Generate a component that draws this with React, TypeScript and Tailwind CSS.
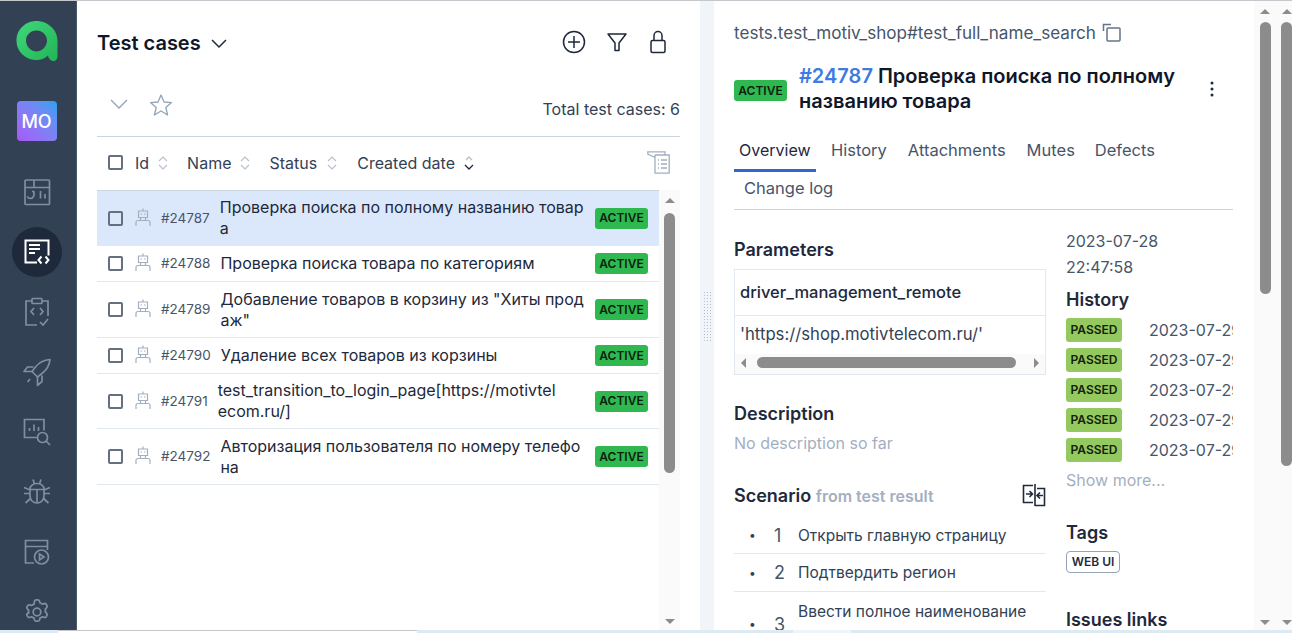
import type { ReactNode } from 'react';

const strokeIcon = 'fill-none stroke-current';

const Logo = () => (
  <svg width="42" height="42" viewBox="0 0 42 42" className="block">
    <defs>
      <linearGradient id="logoGrad" x1="0" y1="0" x2="1" y2="1">
        <stop offset="0" stopColor="#3fd77b" />
        <stop offset="1" stopColor="#22b455" />
      </linearGradient>
    </defs>
    <path
      d="M20.5 1C9.5 1 .5 9.5.5 20.5S9.5 40 20.5 40c5 0 9-2 11.5-4.5.6 3 2.700 5.500 5.500 5.500 2.400 0 4-1.800 4-4.500V20.500C41.500 9.500 31.500 1 20.500 1Zm0 9.500c6 0 10.500 4.500 10.500 10s-4.500 11-10.500 11S10 26 10 20.500s4.500-10 10.500-10Z"
      fill="url(#logoGrad)"
      fillRule="evenodd"
    />
  </svg>
);

const DashboardIcon = () => (
  <svg width="28" height="28" viewBox="0 0 28 28" className={strokeIcon} strokeWidth="1.7">
    <rect x="2" y="2" width="24.500" height="24.500" rx="1" />
    <path d="M2 9.500h24.500M11 2v7.500M9 13.500h1.800c1 3.500-.5 7-3.500 7-1.500 0-2.500-.8-3-2M17.500 13v7.500M22 16v4.500" />
  </svg>
);

const CasesIcon = () => (
  <svg width="28" height="28" viewBox="0 0 28 28" className={strokeIcon} strokeWidth="2">
    <path d="M14 24.500H2.500V2.500h23v15" />
    <path d="M6 7h11M6 11h11M6 15h6" />
    <path d="m18.500 18.500-3 3.500 3 3.500M22.500 18.500l3 3.500-3 3.500" />
  </svg>
);

const ClipboardIcon = () => (
  <svg width="26" height="30" viewBox="0 0 26 30" className={strokeIcon} strokeWidth="1.7">
    <path d="M8 4H2v24h11M18 4h6v15" />
    <rect x="8" y="1.500" width="10" height="5" rx="1" />
    <path d="m10 11-3 3.500 3 3.500M16 11l3 3.500-3 3.500M16 25l3 3 5-6" />
  </svg>
);

const RocketIcon = () => (
  <svg width="28" height="28" viewBox="0 0 28 28" className={strokeIcon} strokeWidth="1.700" strokeLinejoin="round">
    <path d="M27 1.500c-6 .5-11 3-14.500 7.500L9 13.500l5.500 5.500 4.500-3.500c4.500-3.500 7.500-8.500 8-14Z" />
    <path d="M10.500 9H4.500L1 13.500l8 0M19 17.500v6L14.500 27.500v-8.500M7 21l-2.500 3" />
  </svg>
);

const ReportIcon = () => (
  <svg width="28" height="28" viewBox="0 0 28 28" className={strokeIcon} strokeWidth="1.700">
    <path d="M14 19.500H1.500V1.500h19.500v11" />
    <path d="M6.500 13v-3M11 13V6.500M15.500 13V9" />
    <circle cx="19.500" cy="19.500" r="5" />
    <path d="m23 23 4 4" />
  </svg>
);

const BugIcon = () => (
  <svg width="28" height="28" viewBox="0 0 28 28" className={strokeIcon} strokeWidth="1.700">
    <path d="M7 11c0-3 3-5.500 7-5.500s7 2.500 7 5.500v7c0 4-3 7-7 7s-7-3-7-7v-7Z" />
    <path d="M7 11.500h14M14 11.500V25M10 1.500l1.500 4.500M18 1.500 16.500 6M1 9.500l6 2.500M27 9.500l-6 2.500M1 15.500h6M27 15.500h-6M2.500 25l5-4.500M25.500 25l-5-4.500" />
  </svg>
);

const PlayWindowIcon = () => (
  <svg width="26" height="26" viewBox="0 0 26 26" className={strokeIcon} strokeWidth="1.700">
    <path d="M10 24H1.500V1.500h22V11M1.500 7.500h22" />
    <circle cx="17.500" cy="18" r="7" />
    <path d="m15.500 15 4.500 3-4.500 3Z" />
  </svg>
);

const GearIcon = () => (
  <svg width="28" height="28" viewBox="0 0 24 24" className={strokeIcon} strokeWidth="1.500" strokeLinejoin="round">
    <path d="M9.900 2.500c.2-.7.800-1 1.400-1h1.400c.6 0 1.200.3 1.400 1l.4 1.600c.8.300 1.500.7 2.100 1.200l1.600-.5c.7-.2 1.300 0 1.700.6l.7 1.200c.3.500.2 1.200-.3 1.700l-1.200 1.200c.2.800.2 1.600 0 2.400l1.200 1.200c.5.500.6 1.200.3 1.700l-.7 1.200c-.4.600-1 .8-1.700.6l-1.600-.5c-.6.500-1.300.9-2.100 1.200l-.4 1.600c-.2.700-.8 1-1.400 1h-1.400c-.6 0-1.200-.3-1.400-1l-.4-1.600c-.8-.3-1.500-.7-2.100-1.200l-1.600.5c-.7.200-1.300 0-1.700-.6l-.7-1.200c-.3-.5-.2-1.200.3-1.700L4.900 13c-.2-.8-.2-1.600 0-2.400L3.700 9.400c-.5-.5-.6-1.200-.3-1.700l.7-1.200c.4-.6 1-.8 1.700-.6l1.600.5c.6-.5 1.300-.9 2.100-1.200Z" />
    <circle cx="12" cy="12" r="3.300" />
  </svg>
);

const RobotIcon = () => (
  <svg width="16" height="19" viewBox="0 0 16 19" className="-mt-[2px] fill-none stroke-[#a3afbf]" strokeWidth="1.200">
    <path d="M8 .5v2.500M3.500 3h9v6.500h-9zM5.500 6h1.500M9 6h1.500M5.500 9.500v3M10.500 9.500v3M1 18v-3.500c0-1 1-2 2-2h10c1 0 2 1 2 2V18" />
  </svg>
);

const Sorter = () => (
  <svg width="12" height="16" viewBox="0 0 12 16" className="fill-none stroke-[#b6c0cd]" strokeWidth="1.100">
    <path d="m2 6 4-4 4 4M2 10l4 4 4-4" />
  </svg>
);

const SortDown = () => (
  <svg width="12" height="16" viewBox="0 0 12 16" className="fill-none stroke-[#1e293b]" strokeWidth="1.300">
    <path d="m3 5 3-3 3 3" className="stroke-[#b6c0cd]" />
    <path d="m2 10 4 4 4-4" />
  </svg>
);

const Checkbox = () => <span className="block h-[15px] w-[15px] shrink-0 rounded-[2px] border-2 border-[#64707f]" />;

const ActiveBadge = () => (
  <span className="flex h-[21px] w-[53px] shrink-0 items-center justify-center rounded-[3px] bg-[#2fb84f] text-[12px] font-semibold leading-none text-[#0b1f10]">
    ACTIVE
  </span>
);

const Scrollbar = ({ top, height, h, className = '' }: { top: number; height: number; h: number; className?: string }) => (
  <div className={`flex shrink-0 flex-col items-center bg-[#fafafa] ${className}`} style={{ height: h }}>
    <span className="mt-[8px] h-0 w-0 border-x-[5px] border-b-[5px] border-x-transparent border-b-[#8c8c8c]" />
    <span className="w-[11px] rounded-full bg-[#8c8c8c]" style={{ marginTop: top, height }} />
    <span className="mt-auto mb-[6px] h-0 w-0 border-x-[5px] border-t-[5px] border-x-transparent border-t-[#8c8c8c]" />
  </div>
);

const rows = [
  { id: '#24787', lines: ['Проверка поиска по полному названию товар', 'а'], h: 'h-[55px]', selected: true },
  { id: '#24788', lines: ['Проверка поиска товара по категориям'], h: 'h-[36px]' },
  { id: '#24789', lines: ['Добавление товаров в корзину из "Хиты прод', 'аж"'], h: 'h-[56px]' },
  { id: '#24790', lines: ['Удаление всех товаров из корзины'], h: 'h-[36px]' },
  { id: '#24791', lines: ['test_transition_to_login_page[https://motivtel', 'ecom.ru/]'], h: 'h-[55px]' },
  { id: '#24792', lines: ['Авторизация пользователя по номеру телефо', 'на'], h: 'h-[56px]' },
];

const Row = ({ id, lines, h, selected }: { id: string; lines: string[]; h: string; selected?: boolean }) => (
  <div className={`flex items-center border-b border-[#e2e8f0] pl-[11px] pr-[11px] ${h} ${selected ? 'bg-[#dbe8fb]' : ''}`}>
    <Checkbox />
    <span className="ml-[12px] mr-[10px]">
      <RobotIcon />
    </span>
    <span className="mr-[10px] text-[13.500px] text-[#475569]">{id}</span>
    <span className="min-w-0 flex-1 whitespace-nowrap text-[16px] leading-[21px] text-[#1e293b]">
      {lines.map((l) => (
        <span key={l} className="block">
          {l}
        </span>
      ))}
    </span>
    <ActiveBadge />
  </div>
);

const SectionTitle = ({ children, className = '' }: { children: ReactNode; className?: string }) => (
  <h3 className={`text-[18px] font-semibold leading-[24px] text-[#1e293b] ${className}`}>{children}</h3>
);

const Step = ({ n, text, h }: { n: number; text: string; h: string }) => (
  <div className={`flex items-center border-b border-[#e2e8f0] ${h}`}>
    <span className="w-[34px] pl-[15px] text-[12px] text-[#334155]">•</span>
    <span className="w-[30px] pl-[6px] text-[18px] text-[#475569]">{n}</span>
    <span className="text-[15.500px] leading-[21px] text-[#334155]">{text}</span>
  </div>
);

const navIcons = [
  <DashboardIcon key="d" />,
  <CasesIcon key="c" />,
  <ClipboardIcon key="cl" />,
  <RocketIcon key="r" />,
  <ReportIcon key="re" />,
  <BugIcon key="b" />,
  <PlayWindowIcon key="p" />,
  <GearIcon key="g" />,
];

export default function App() {
  return (
    <div className="flex h-[633px] w-[1292px] flex-col overflow-hidden bg-white font-['Inter',sans-serif]">
      <div className="h-px shrink-0 bg-[#c4c8cc]" />
      <div className="flex min-h-0 flex-1">
        {/* sidebar */}
        <aside className="flex w-[77px] shrink-0 flex-col items-center overflow-hidden border-r border-[#4a5a6e] bg-[#334155] pr-[3px] text-[#7f8ea3]">
          <div className="mt-[19px] h-[42px]">
            <Logo />
          </div>
          <div className="mt-[39px] flex h-[40px] w-[40px] shrink-0 items-center justify-center rounded-[4px] bg-gradient-to-tr from-[#a855f7] to-[#1da1f2] text-[18px] font-medium text-white">
            MO
          </div>
          <div className="mt-[20px] flex flex-col pt-[1px]">
            {navIcons.map((icon, i) => (
              <div key={i} className="flex h-[60px] w-[50px] shrink-0 items-center justify-center">
                {i === 1 ? (
                  <span className="flex h-[50px] w-[50px] items-center justify-center rounded-full bg-[#1e293b] text-white">
                    {icon}
                  </span>
                ) : (
                  icon
                )}
              </div>
            ))}
          </div>
        </aside>

        {/* test cases list */}
        <section className="flex w-[623px] shrink-0 flex-col pl-[20px] pr-[20px]">
          <div className="flex h-[63px] shrink-0 items-end pb-[7px]">
            <h1 className="text-[20px] font-semibold leading-[28px] text-[#0f172a]">Test cases</h1>
            <svg width="18" height="28" viewBox="0 0 18 28" className="ml-[9px] fill-none stroke-[#1e293b]" strokeWidth="1.500">
              <path d="m2 11 7 7 7-7" />
            </svg>
            <div className="mb-[3px] ml-auto flex items-center gap-[20px] pr-[12px] text-[#1e293b]">
              <svg width="24" height="24" viewBox="0 0 24 24" className={strokeIcon} strokeWidth="1.500">
                <circle cx="12" cy="12" r="10.500" />
                <path d="M12 6v12M6 12h12" />
              </svg>
              <svg width="22" height="22" viewBox="0 0 22 22" className={strokeIcon} strokeWidth="1.500" strokeLinejoin="round">
                <path d="M2 3h18l-7 9v7.500H9V12Z" />
              </svg>
              <svg width="20" height="24" viewBox="0 0 20 24" className={strokeIcon} strokeWidth="1.500">
                <rect x="3" y="10.500" width="14" height="12" rx="1.500" />
                <path d="M6 10.500V5.500a4 4 0 0 1 8 0v5" />
              </svg>
            </div>
          </div>
          <div className="flex h-[73px] shrink-0 items-center border-b border-[#cbd5e1] pt-[10px]">
            <svg width="20" height="20" viewBox="0 0 20 20" className="ml-[12px] fill-none stroke-[#94a3b8]" strokeWidth="1.300">
              <path d="m2 5 8 8 8-8" />
            </svg>
            <svg width="24" height="24" viewBox="0 0 24 24" className="ml-[20px] fill-none stroke-[#94a3b8]" strokeWidth="1.300" strokeLinejoin="round">
              <path d="m12 2 3 7 7.500.6-5.700 4.900 1.800 7.500L12 18l-6.600 4 1.800-7.500L1.500 9.600 9 9Z" />
            </svg>
            <span className="ml-auto mt-[8px] text-[16px] text-[#334155]">Total test cases: 6</span>
          </div>
          <div className="flex h-[53px] shrink-0 items-center pb-[2px] pl-[11px] text-[16px] text-[#334155]">
            <Checkbox />
            <span className="ml-[12px]">Id</span>
            <span className="ml-[8px]"><Sorter /></span>
            <span className="ml-[18px]">Name</span>
            <span className="ml-[8px]"><Sorter /></span>
            <span className="ml-[18px]">Status</span>
            <span className="ml-[9px]"><Sorter /></span>
            <span className="ml-[19px]">Created date</span>
            <span className="ml-[8px]"><SortDown /></span>
            <svg width="23" height="23" viewBox="0 0 23 23" className="ml-auto mr-[10px] fill-none stroke-[#a3afbf]" strokeWidth="1.300">
              <path d="M18 4V.8H.8V3L8 6.500M8 4h14.200v18.200H8V4M11 9h1M14 9h6M11 13h1M14 13h6M11 17h1M14 17h6" />
            </svg>
          </div>
          <div className="flex min-h-0 flex-1">
            <div className="min-w-0 flex-1 border-t border-[#cbd5e1]">
              {rows.map((r) => (
                <Row key={r.id} {...r} />
              ))}
            </div>
            <Scrollbar top={10} height={260} h={440} className="w-[21px]" />
          </div>
        </section>

        {/* splitter */}
        <div className="flex w-[14px] shrink-0 items-center justify-center bg-[#f1f5f9]">
          <span className="h-[50px] w-[8px] bg-[radial-gradient(#b4bfcc_1px,transparent_1px)] bg-[length:3px_3px]" />
        </div>

        {/* test case details */}
        <section className="flex min-w-0 flex-1">
          <div className="w-[540px] shrink-0 overflow-hidden pl-[20px] pr-[21px]">
            <div className="mt-[20px] flex items-center text-[17.100px] leading-[24px] text-[#475569]">
              tests.test_motiv_shop#test_full_name_search
              <svg width="20" height="20" viewBox="0 0 20 20" className="ml-[6px] fill-none stroke-[#64748b]" strokeWidth="1.500">
                <rect x="5" y="5" width="13" height="13" rx="1" />
                <path d="M1.500 8V1.500H9" />
              </svg>
            </div>
            <div className="mt-[19px] flex items-center">
              <span className="mt-[3px]">
                <ActiveBadge />
              </span>
              <h2 className="ml-[12px] w-[385px] text-[20px] font-semibold leading-[25px] text-[#0f172a]">
                <span className="text-[#3f7be0]">#24787</span> Проверка поиска по полному названию товара
              </h2>
              <svg width="6" height="18" viewBox="0 0 6 18" className="ml-[25px] fill-[#1e293b]">
                <circle cx="3" cy="3" r="1.500" />
                <circle cx="3" cy="9" r="1.500" />
                <circle cx="3" cy="15" r="1.500" />
              </svg>
            </div>
            <div className="mt-[21px] border-b border-[#cbd5e1] pb-[7px] text-[16.500px] text-[#475569]">
              <div className="flex h-[37px]">
                <span className="h-[37px] w-[82px] border-b-[3px] border-[#3366cc] pl-[5px] pt-[3px] text-[16px] text-[#1e293b]">Overview</span>
                <span className="ml-[15px] pt-[3px]">History</span>
                <span className="ml-[21px] pt-[3px]">Attachments</span>
                <span className="ml-[21px] pt-[3px]">Mutes</span>
                <span className="ml-[20px] pt-[3px]">Defects</span>
              </div>
              <div className="h-[30px] pl-[10px] pt-[4px]">Change log</div>
            </div>
            <div className="flex gap-[20px]">
              <div className="w-[312px] shrink-0">
                <SectionTitle className="mt-[28px]">Parameters</SectionTitle>
                <div className="mt-[7px] border border-[#e2e8f0]">
                  <div className="flex h-[46px] items-center border-b border-[#e2e8f0] pl-[5px] text-[16.500px] font-medium text-[#1e293b]">
                    driver_management_remote
                  </div>
                  <div className="flex h-[38px] items-center pl-[5px] text-[16.700px] text-[#334155]">
                    'https://shop.motivtelecom.ru/'
                  </div>
                  <div className="flex h-[20px] items-center bg-[#fafafa] px-[6px] pb-[3px]">
                    <span className="h-0 w-0 border-y-[5px] border-r-[5px] border-y-transparent border-r-[#8c8c8c]" />
                    <span className="ml-[11px] h-[11px] w-[259px] rounded-full bg-[#8c8c8c]" />
                    <span className="ml-auto h-0 w-0 border-y-[5px] border-l-[5px] border-y-transparent border-l-[#8c8c8c]" />
                  </div>
                </div>
                <SectionTitle className="mt-[27px]">Description</SectionTitle>
                <p className="mt-[5px] text-[16px] leading-[24px] text-[#a3afbf]">No description so far</p>
                <div className="mt-[29px] flex items-center justify-between">
                  <SectionTitle>
                    Scenario <span className="text-[16px] text-[#a3afbf]">from test result</span>
                  </SectionTitle>
                  <svg width="24" height="24" viewBox="0 0 24 24" className="-mt-[3px] fill-none stroke-[#1e293b]" strokeWidth="1.600">
                    <path d="M11 2.500H1.500v17H11M13 1v22M15 5.500h7.500v17H13M4 11h6M7.500 8l3 3-3 3M21 12.500h-6M18 9.500l-3 3 3 3" />
                  </svg>
                </div>
                <div className="mt-[9px]">
                  <Step n={1} text="Открыть главную страницу" h="h-[37px]" />
                  <Step n={2} text="Подтвердить регион" h="h-[38px]" />
                  <div className="flex h-[64px] items-center">
                    <span className="w-[34px] pl-[15px] text-[12px] text-[#334155]">•</span>
                    <span className="w-[30px] pl-[6px] text-[18px] text-[#475569]">3</span>
                    <span className="-mt-[26px] text-[15.500px] leading-[21px] text-[#334155]">Ввести полное наименование</span>
                  </div>
                </div>
              </div>
              <div className="min-w-0 flex-1 overflow-hidden pt-[18px] text-[16px] text-[#475569]">
                <p className="leading-[26px]">
                  2023-07-28
                  <br />
                  22:47:58
                </p>
                <SectionTitle className="mt-[8px]">History</SectionTitle>
                <div className="mt-[6px] flex flex-col gap-[6px]">
                  {[1, 2, 3, 4, 5].map((n) => (
                    <div key={n} className="flex h-[24px] items-center whitespace-nowrap">
                      <span className="flex h-[24px] w-[56px] shrink-0 items-center justify-center rounded-[3px] bg-[#93c95f] text-[12px] font-semibold text-[#14210a]">
                        PASSED
                      </span>
                      <span className="ml-[27px]">2023-07-29</span>
                    </div>
                  ))}
                </div>
                <p className="mt-[6px] leading-[24px] text-[#a3afbf]">Show more...</p>
                <SectionTitle className="mt-[29px]">Tags</SectionTitle>
                <span className="mt-[6px] block h-[22px] w-[54px] rounded-[4px] border border-[#94a3b8] text-center text-[12px] font-semibold leading-[20px] text-[#1e293b]">
                  WEB UI
                </span>
                <SectionTitle className="mt-[35px]">Issues links</SectionTitle>
              </div>
            </div>
          </div>
          <Scrollbar top={8} height={272} h={630} className="w-[22px]" />
          <Scrollbar top={8} height={444} h={630} className="flex-1 pl-[5px]" />
        </section>
      </div>
      <div className="flex h-[3px] shrink-0 bg-[#dbeaf3]">
        <div className="ml-[58px] h-full w-[359px] border-t border-[#c4c8cc] bg-white" />
        <div className="ml-[376px] h-full w-[58px] bg-[#eef4f9]" />
      </div>
    </div>
  );
}
